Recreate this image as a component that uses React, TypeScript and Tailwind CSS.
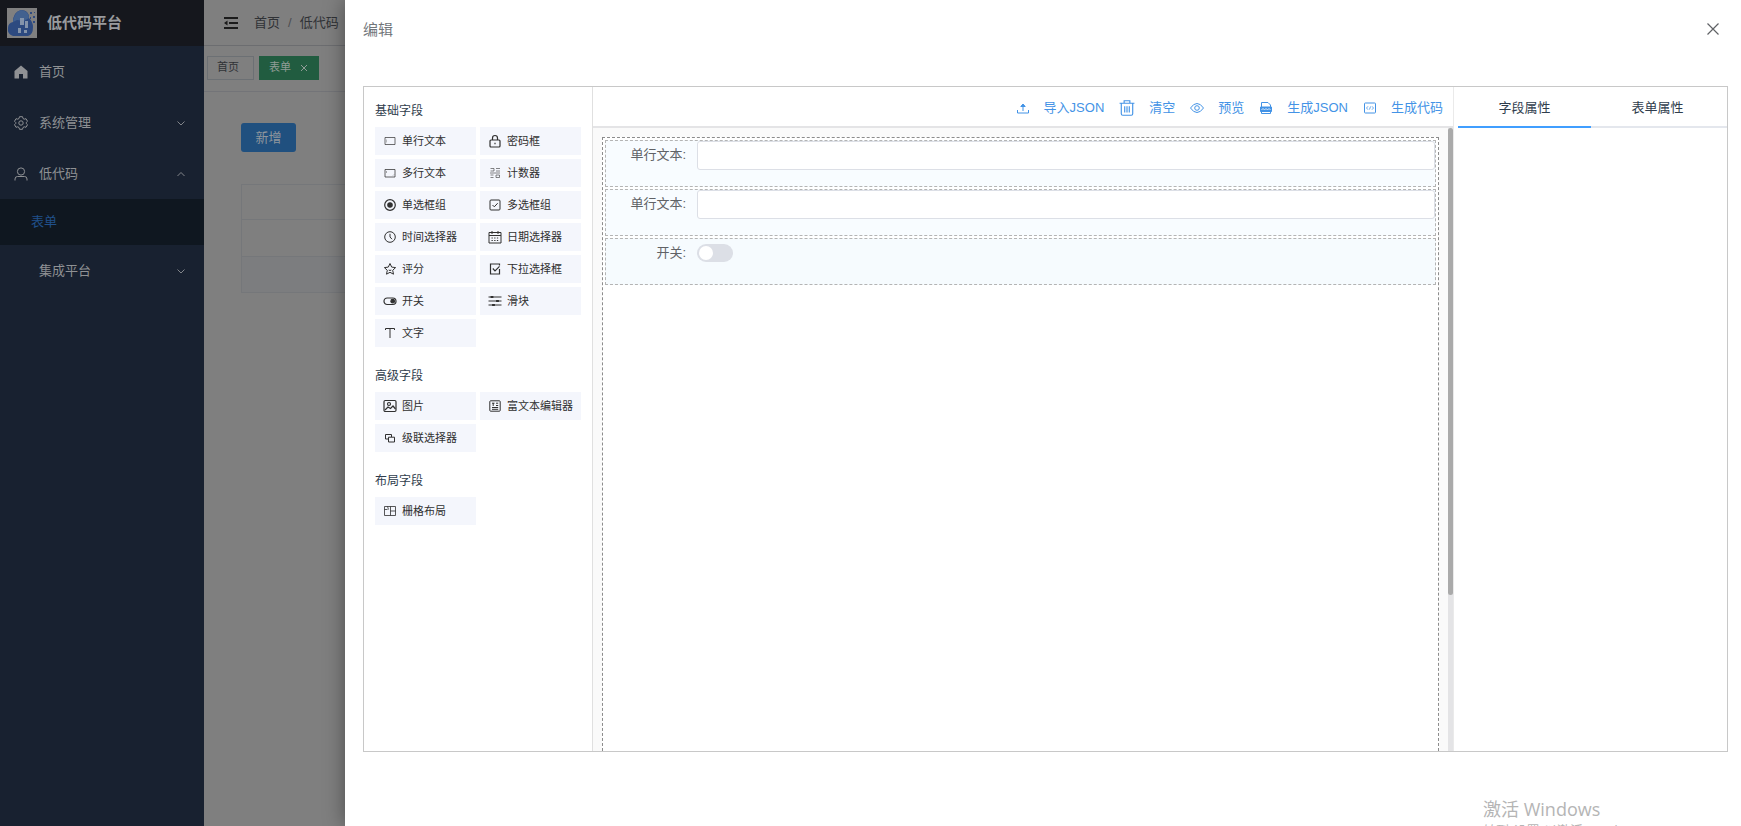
import { useState } from "react";
import type { ReactNode } from "react";

interface Field {
  label: string;
  icon: ReactNode;
}

interface FieldGroup {
  title: string;
  fields: Field[];
}

function Icon({ children, size = "size-[14px]", width = 1.2 }: { children: ReactNode; size?: string; width?: number }) {
  return (
    <svg viewBox="0 0 14 14" className={`${size} shrink-0`} fill="none" stroke="currentColor" strokeWidth={width} aria-hidden="true">
      {children}
    </svg>
  );
}

const groups: FieldGroup[] = [
  {
    title: "基础字段",
    fields: [
      { label: "单行文本", icon: <Icon width={1}><path d="M2 3.5h10v7H2z" opacity=".7" /><path d="M3.5 5.5v3" opacity=".3" /></Icon> },
      { label: "密码框", icon: <Icon><rect x="2" y="6" width="10" height="7" rx="1" /><path d="M4.5 6V4a2.5 2.5 0 0 1 5 0v2M7 8.7v1.6" /></Icon> },
      { label: "多行文本", icon: <Icon width={1}><path d="M2 3.5h10v7.5H2z" opacity=".75" /><path d="M3.5 5v2M10 9.5l1-1" opacity=".4" /></Icon> },
      { label: "计数器", icon: <Icon width={0.9}><path d="M2.5 2.5h3.5v2.5H2.5M8 2.5h4M8 5h4M2 7h10M2.500 9h3M2.5 11.5h3M8 9h3.5v2.500H8z" opacity=".65" /></Icon> },
      { label: "单选框组", icon: <Icon><circle cx="7" cy="7" r="5.3" /><circle cx="7" cy="7" r="2.2" fill="currentColor" /></Icon> },
      { label: "多选框组", icon: <Icon width={1}><rect x="2" y="2" width="10" height="10" rx="1" /><path d="M4.5 7l1.8 1.8L9.7 5.2" /></Icon> },
      { label: "时间选择器", icon: <Icon width={1}><circle cx="7" cy="7" r="5.3" /><path d="M7 3.8V7l2 2.2" /></Icon> },
      { label: "日期选择器", icon: <Icon width={1}><path d="M1 2.5h12V13H1zM1 5.5h12M4 1v3M10 1v3" /><path d="M3.5 8H11M3.5 10.5H11" strokeDasharray="1.3 1.4" /></Icon> },
      { label: "评分", icon: <Icon width={1}><path d="M7 1.5l1.7 3.6 3.9.5-2.9 2.7.8 3.9L7 10.300l-3.5 1.9.8-3.900L1.400 5.600l3.900-.5z" /><path d="M5.7 8q1.3 1 2.6 0" /></Icon> },
      { label: "下拉选择框", icon: <Icon><path d="M11.5 7v5h-9V2h9v1.500M4.800 6.500L7 8.800l4.500-4.500" /></Icon> },
      { label: "开关", icon: <Icon><rect x="1" y="4" width="12" height="6.5" rx="3.2" /><circle cx="9.7" cy="7.2" r="1.8" fill="currentColor" /></Icon> },
      { label: "滑块", icon: <Icon><path d="M.5 3h13M.5 7h13M.5 11h13" /><path d="M4 2v2M9.5 6v2M5.5 10v2" strokeWidth={2.8} /></Icon> },
      { label: "文字", icon: <Icon width={1}><path d="M2.5 4V2.5h9V4M7 2.5V12" /></Icon> },
    ],
  },
  {
    title: "高级字段",
    fields: [
      { label: "图片", icon: <Icon><rect x="1" y="1.5" width="12" height="11" rx="1.2" /><circle cx="6" cy="5" r="1.5" /><path d="M2 11l3-3 2.5 1.5L10 7l2.5 3" /></Icon> },
      { label: "富文本编辑器", icon: <Icon width={1}><rect x="1.8" y="1.8" width="10.4" height="10.4" rx=".8" /><path d="M4 4.200h2.500M5.200 4v3M8 4.200h2.200M8 6.500h2.200M4 8.500h6.200M4 10.300h6.200" /></Icon> },
      { label: "级联选择器", icon: <Icon width={1}><path d="M5 8H2.5V3.5h6V6M5.5 6.200h6V11h-6z" /></Icon> },
    ],
  },
  {
    title: "布局字段",
    fields: [
      { label: "栅格布局", icon: <Icon width={1}><path d="M1.500 2.500h11v9h-11zM7.500 2.500v9M7.500 7h5M1.500 5.500h3M4.500 2.500l1 3" opacity=".8" /></Icon> },
    ],
  },
];

const actions: Field[] = [
  { label: "导入JSON", icon: <Icon width={1}><path d="M1.5 9v3h11V9M7 10V4" /><path d="M4.800 5.500L7 3l2.200 2.500z" fill="currentColor" /></Icon> },
  { label: "清空", icon: <Icon size="size-[16px]" width={1}><path d="M.5 2.800h13M4.500 2.500V.7h5v1.800M2 3v9q0 1.300 1.300 1.300h7.400q1.300 0 1.300-1.300V3M5 5.500V11M7 5.500V11M9 5.500V11" /></Icon> },
  { label: "预览", icon: <Icon width={1}><path d="M.5 7Q3.500 2.500 7 2.500T13.500 7Q10.500 11.500 7 11.500T.5 7z" /><circle cx="7" cy="7" r="2.300" /></Icon> },
  { label: "生成JSON", icon: <Icon width={1}><path d="M2.500 6V1.500H9L11.500 4v2M2.500 10.500v2h9v-2" /><path d="M1.500 6h11v4.500h-11z" fill="currentColor" /><path d="M2.500 9l1.500-1.500L5.500 9 7 7.500 8.500 9 10 7.500 11.500 9" stroke="white" strokeWidth={0.8} /></Icon> },
  { label: "生成代码", icon: <Icon width={1}><rect x="1.500" y="2" width="11" height="10" rx=".8" /><path d="M5 5.300L3.500 7 5 8.700M9 5.300L10.500 7 9 8.700M7.500 5.500l-1 3" strokeWidth={0.8} /></Icon> },
];

function Chevron({ up = false }: { up?: boolean }) {
  return (
    <svg viewBox="0 0 10 10" className="ml-auto size-[10px]" fill="none" stroke="currentColor" strokeWidth="0.9" aria-hidden="true">
      <path d={up ? "M1.500 7L5 3.500 8.500 7" : "M1.500 3.500L5 7l3.500-3.500"} />
    </svg>
  );
}

function Logo() {
  return (
    <svg viewBox="0 0 30 30" className="size-[30px]" aria-hidden="true">
      <rect width="30" height="30" fill="#808080" />
      <path d="M6 28q-6-2-5-8 0-5 5-6 0-10 8-12 8 0 8 8 4 4 4 9 0 8-5 9z" fill="#2d4a80" />
      <path d="M6 14q1-10 8-12 8 1 8 8l-5 3-7-1z" fill="#42618f" />
      <path d="M13 10h4v7h-4zM18 13h3v7h-3zM11 20h3v5h-3zM17 22h3v3h-3z" fill="#8494ab" />
      <path d="M23 4h2v2h-2zM26 8h2v2h-2zM23 9h1v2h-1zM26 13h2v2h-2zM27 4h1v1h-1z" fill="#2d4a80" />
    </svg>
  );
}

function Sidebar() {
  return (
    <aside className="w-[204px] shrink-0 bg-[#182130] text-[13px] text-[#8f9194]">
      <div className="flex h-[46px] items-center gap-[10px] bg-[#15171d] pl-[7px]">
        <Logo />
        <h1 className="text-[15px] font-bold text-[#999b9e]">低代码平台</h1>
      </div>
      <nav>
        <a href="#home" className="flex h-[51px] items-center gap-[11px] px-[14px]">
          <svg viewBox="0 0 14 14" className="size-[14px]" fill="currentColor" aria-hidden="true">
            <path d="M7 .5L13.500 6v7.500H9V9H5v4.500H.5V6z" />
          </svg>
          首页
        </a>
        <a href="#system" className="flex h-[51px] items-center gap-[11px] pr-[18px] pl-[14px]">
          <Icon width={1}>
            <path d="M5.500.7h3l.5 1.800 1.200.7 1.800-.5 1.500 2.600L12.200 6.600v.8l1.300 1.300-1.500 2.600-1.800-.5-1.200.7-.5 1.800h-3L5 11.500l-1.200-.7-1.800.5L.5 8.700l1.300-1.300v-.8L.5 5.300 2 2.700l1.800.5L5 2.500z" />
            <circle cx="7" cy="7" r="2.200" />
          </Icon>
          系统管理
          <Chevron />
        </a>
        <a href="#lowcode" className="flex h-[51px] items-center gap-[11px] pr-[18px] pl-[14px]">
          <Icon width={1}><circle cx="7" cy="4.500" r="3.600" /><path d="M1 13.500V12q0-2.500 2.500-2.500h7Q13 9.500 13 12v1.500" /></Icon>
          低代码
          <Chevron up />
        </a>
        <a href="#form" className="flex h-[46px] items-center bg-[#0f1720] pl-[31px] text-[#20508a]">表单</a>
        <a href="#integration" className="flex h-[51px] items-center pr-[18px] pl-[39px]">
          集成平台
          <Chevron />
        </a>
      </nav>
    </aside>
  );
}

function Background() {
  return (
    <main className="min-w-0 flex-1 bg-[#7f7f7f] text-[#303236]">
      <header className="flex h-[46px] items-center border-b border-[#6c6d70] pl-[20px] text-[13px]">
        <svg viewBox="0 0 14 12" className="mr-4 w-[14px]" fill="none" stroke="#1b1b1b" strokeWidth="1.800" aria-hidden="true">
          <path d="M0 1h14M5 6h9M0 11h14" />
          <path d="M3.500 3.500v5L0 6z" fill="#1b1b1b" stroke="none" />
        </svg>
        <span>首页</span>
        <span className="mx-2 text-[#4c4d50]">/</span>
        <span>低代码</span>
      </header>
      <div className="flex h-[46px] items-center gap-[5px] border-b border-[#737478] pb-[2px] pl-[3px] text-[11px]">
        <button className="h-6 w-[47px] border border-[#6c7074] pl-[9px] text-left">首页</button>
        <button className="flex h-6 w-[60px] items-center gap-[9px] bg-[#215c40] pl-[10px] text-[#909c96]">
          表单
          <svg viewBox="0 0 8 8" className="size-2" stroke="currentColor" aria-hidden="true"><path d="M1 1l6 6M7 1L1 7" /></svg>
        </button>
      </div>
      <div className="pt-[31px] pl-[37px]">
        <button className="h-[29px] w-[55px] rounded-[3px] bg-[#20507f] text-[13px] text-[#8f969d]">新增</button>
        <div className="mt-8 border border-r-0 border-[#75777a]">
          <div className="h-[35px] border-b border-[#75777a]" />
          <div className="h-[37px] border-b border-[#75777a]" />
          <div className="h-[35px] bg-[#7c7d7f]" />
        </div>
      </div>
    </main>
  );
}

function FieldPanel() {
  return (
    <section className="w-[229px] shrink-0 border-r border-[#e0e0e0] px-[11px] pt-3">
      {groups.map((group) => (
        <div key={group.title} className="mb-[17px]">
          <h3 className="flex h-6 items-center text-[12px] text-[#303d4d]">{group.title}</h3>
          <div className="mt-1 grid grid-cols-2 gap-1">
            {group.fields.map((field) => (
              <button key={field.label} className="flex h-7 items-center gap-[5px] bg-[#f4f6fc] pl-2 text-[11px] whitespace-nowrap text-[#303030]">
                {field.icon}
                {field.label}
              </button>
            ))}
          </div>
        </div>
      ))}
    </section>
  );
}

function Canvas() {
  const [on, setOn] = useState(false);

  return (
    <section className="flex min-w-0 flex-1 flex-col">
      <div className="flex h-[41px] shrink-0 items-center justify-end gap-[15px] border-b-2 border-[#e4e4e6] pt-[2px] pr-[10px] text-[13px] text-[#4393e6]">
        {actions.map((action) => (
          <button key={action.label} className="flex items-center gap-[14px] whitespace-nowrap">
            {action.icon}
            {action.label}
          </button>
        ))}
      </div>
      <div className="flex min-h-0 flex-1 bg-[#fafafa]">
        <div className="mt-[9px] ml-[9px] flex-1 border border-b-0 border-dashed border-[#8c8c8c] bg-white p-[2px]">
          <div className="flex flex-col gap-[2px]">
            {["text1", "text2"].map((id) => (
              <div key={id} className="flex h-[47px] border border-dashed border-[#b4b4b4] bg-[#f8fcff] text-[13px] text-[#606266]">
                <label htmlFor={id} className="w-20 pt-1 text-right">单行文本:</label>
                <input id={id} type="text" className="ml-[11px] h-[29px] min-w-0 flex-1 rounded-[3px] border border-[#dcdfe6] bg-white px-3 outline-none" />
              </div>
            ))}
            <div className="flex h-[47px] border border-dashed border-[#b4b4b4] bg-[#f6fbfe] text-[13px] text-[#606266]">
              <label htmlFor="toggle" className="w-20 pt-1 text-right">开关:</label>
              <input
                id="toggle"
                type="checkbox"
                checked={on}
                onChange={(e) => setOn(e.target.checked)}
                className="mt-[5px] ml-[11px] flex h-[18px] w-9 appearance-none items-center rounded-full bg-[#dcdfe6] px-[2px] before:size-[14px] before:rounded-full before:bg-white checked:justify-end checked:bg-[#409eff]"
              />
            </div>
          </div>
        </div>
        <div className="ml-[9px] w-[5px] bg-[#e4e4e6]">
          <div className="h-3/4 rounded-full bg-[#aaaaaa]" />
        </div>
      </div>
    </section>
  );
}

function PropertyPanel() {
  return (
    <section className="w-[274px] shrink-0 border-l border-[#eaeaea] pl-1">
      <div className="flex h-[41px] border-b-2 border-[#e4e7ed] text-[13px] text-[#303d4d]">
        <button className="-mb-[2px] w-[133px] border-b-2 border-[#409eff] pt-[2px]">字段属性</button>
        <button className="w-[133px] pt-[2px]">表单属性</button>
      </div>
    </section>
  );
}

export default function App() {
  return (
    <div className="relative flex h-screen overflow-hidden font-['Liberation_Sans','Noto_Sans_CJK_SC',sans-serif]">
      <Sidebar />
      <Background />
      <div role="dialog" aria-label="编辑" className="absolute inset-y-0 right-0 left-[345px] flex flex-col bg-white px-[18px] shadow-[0_0_20px_rgba(0,0,0,0.4)]">
        <header className="flex h-[60px] items-center justify-between text-[15px] text-[#72767b]">
          <h2>编辑</h2>
          <button aria-label="关闭" className="mr-1 pb-[2px]">
            <svg viewBox="0 0 12 12" className="size-3" stroke="#606266" strokeWidth="1.200" aria-hidden="true"><path d="M.5.5l11 11M11.500.5l-11 11" /></svg>
          </button>
        </header>
        <div className="mt-[26px] mr-[-5px] mb-[74px] flex min-h-0 flex-1 border border-[#c8c8c8]">
          <FieldPanel />
          <Canvas />
          <PropertyPanel />
        </div>
        <div className="absolute right-[90px] bottom-0 h-[29px] w-[168px] overflow-hidden font-['Open_Sans','Noto_Sans_CJK_SC',sans-serif] whitespace-nowrap text-[#b5b5b5]">
          <p className="text-[18px] leading-6">激活 Windows</p>
          <p className="text-[13px] leading-[18px]">转到“设置”以激活 Windows。</p>
        </div>
      </div>
    </div>
  );
}
